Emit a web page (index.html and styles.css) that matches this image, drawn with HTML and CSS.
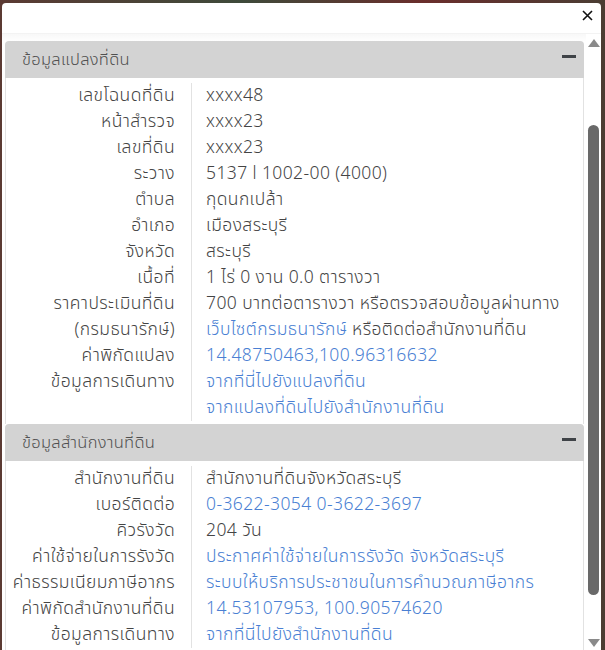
FILE: index.html
```html
<!DOCTYPE html>
<html lang="th">
<head>
    <meta charset="UTF-8">
    <meta name="viewport" content="width=device-width, initial-scale=1.0">
    <title>ข้อมูลแปลงที่ดิน</title>
    <link rel="stylesheet" href="styles.css">
</head>
<body>
    <div class="popup">
        <div class="popup-top">
            <button class="close-btn" aria-label="close">
                <svg width="11" height="11" viewBox="0 0 11 11"><path d="M1 1 L10 10 M10 1 L1 10" stroke="#111" stroke-width="1.6" fill="none"/></svg>
            </button>
        </div>

        <div class="scroll-wrap">
            <div class="content">
                <section class="panel">
                    <div class="panel-head">
                        <span>ข้อมูลแปลงที่ดิน</span>
                        <span class="minus"></span>
                    </div>
                    <div class="panel-body">
                        <div class="info-row"><div class="label">เลขโฉนดที่ดิน</div><div class="value">xxxx48</div></div>
                        <div class="info-row"><div class="label">หน้าสำรวจ</div><div class="value">xxxx23</div></div>
                        <div class="info-row"><div class="label">เลขที่ดิน</div><div class="value">xxxx23</div></div>
                        <div class="info-row"><div class="label">ระวาง</div><div class="value">5137 l 1002-00 (4000)</div></div>
                        <div class="info-row"><div class="label">ตำบล</div><div class="value">กุดนกเปล้า</div></div>
                        <div class="info-row"><div class="label">อำเภอ</div><div class="value">เมืองสระบุรี</div></div>
                        <div class="info-row"><div class="label">จังหวัด</div><div class="value">สระบุรี</div></div>
                        <div class="info-row"><div class="label">เนื้อที่</div><div class="value">1 ไร่ 0 งาน 0.0 ตารางวา</div></div>
                        <div class="info-row">
                            <div class="label">ราคาประเมินที่ดิน<br>(กรมธนารักษ์)</div>
                            <div class="value">700 บาทต่อตารางวา หรือตรวจสอบข้อมูลผ่านทาง<br><a href="#">เว็บไซต์กรมธนารักษ์</a> หรือติดต่อสำนักงานที่ดิน</div>
                        </div>
                        <div class="info-row"><div class="label">ค่าพิกัดแปลง</div><div class="value"><a href="#">14.48750463,100.96316632</a></div></div>
                        <div class="info-row">
                            <div class="label">ข้อมูลการเดินทาง</div>
                            <div class="value"><a href="#">จากที่นี่ไปยังแปลงที่ดิน</a><br><a href="#">จากแปลงที่ดินไปยังสำนักงานที่ดิน</a></div>
                        </div>
                    </div>
                </section>

                <section class="panel">
                    <div class="panel-head">
                        <span>ข้อมูลสำนักงานที่ดิน</span>
                        <span class="minus"></span>
                    </div>
                    <div class="panel-body">
                        <div class="info-row"><div class="label">สำนักงานที่ดิน</div><div class="value">สำนักงานที่ดินจังหวัดสระบุรี</div></div>
                        <div class="info-row"><div class="label">เบอร์ติดต่อ</div><div class="value"><a href="#">0-3622-3054</a> <a href="#">0-3622-3697</a></div></div>
                        <div class="info-row"><div class="label">คิวรังวัด</div><div class="value">204 วัน</div></div>
                        <div class="info-row"><div class="label">ค่าใช้จ่ายในการรังวัด</div><div class="value"><a href="#">ประกาศค่าใช้จ่ายในการรังวัด จังหวัดสระบุรี</a></div></div>
                        <div class="info-row"><div class="label">ค่าธรรมเนียมภาษีอากร</div><div class="value"><a href="#">ระบบให้บริการประชาชนในการคำนวณภาษีอากร</a></div></div>
                        <div class="info-row"><div class="label">ค่าพิกัดสำนักงานที่ดิน</div><div class="value"><a href="#">14.53107953, 100.90574620</a></div></div>
                        <div class="info-row"><div class="label">ข้อมูลการเดินทาง</div><div class="value"><a href="#">จากที่นี่ไปยังสำนักงานที่ดิน</a></div></div>
                    </div>
                </section>
            </div>

            <div class="scrollbar">
                <span class="arrow-up"></span>
                <div class="track"><div class="thumb"></div></div>
                <span class="arrow-down"></span>
            </div>
        </div>
    </div>
</body>
</html>
```

FILE: styles.css
```css
:root {
    --text-color: #444;
    --link-color: #4a7fd3;
    --head-bg: #d3d3d3;
    --line-color: #e2e2e2;
}

* {
    margin: 0;
    padding: 0;
    box-sizing: border-box;
}

body {
    font-family: "Noto Sans Thai", "Noto Sans", "DejaVu Sans", sans-serif;
    font-weight: 340;
    background: linear-gradient(90deg, #5b3a33, #3e4a3a 40%, #6a2e2c 70%, #4a3d33);
    color: var(--text-color);
    height: 650px;
    overflow: hidden;
}

.popup {
    margin: 3px 4px 0 2px;
    height: 647px;
    background: #fff;
    border-radius: 4px 4px 0 0;
    display: flex;
    flex-direction: column;
}

.popup-top {
    height: 30px;
    display: flex;
    justify-content: flex-end;
    align-items: flex-start;
    padding: 6px 7px 0 0;
}

.close-btn {
    border: none;
    background: none;
    width: 13px;
    height: 13px;
    display: flex;
    align-items: center;
    justify-content: center;
    cursor: pointer;
}

.scroll-wrap {
    flex: 1;
    display: flex;
    overflow: hidden;
    border-top: 1px solid #f3f3f3;
    background: linear-gradient(#f8f8f8, #fff 8px);
}

.content {
    flex: 1;
    padding: 7px 2px 0 3px;
    overflow: hidden;
}

.panel-head {
    height: 37px;
    background: var(--head-bg);
    border-radius: 4px 4px 0 0;
    display: flex;
    align-items: center;
    justify-content: space-between;
    padding: 0 8px 0 17px;
    font-size: 16.5px;
    letter-spacing: 0.3px;
    color: #505050;
}

.minus {
    width: 14px;
    height: 3px;
    background: #3f4347;
    margin-top: -6px;
}

.panel-body {
    background: #fff;
    border-left: 1px solid var(--line-color);
    border-right: 1px solid var(--line-color);
    padding: 5px 0 3px;
}

.info-row {
    display: grid;
    grid-template-columns: 186px 1fr;
    font-size: 17.5px;
    letter-spacing: 0.4px;
    line-height: 26px;
}

.label {
    text-align: right;
    padding-right: 16px;
    border-right: 1px solid var(--line-color);
    white-space: nowrap;
}

.value {
    padding-left: 14px;
    white-space: nowrap;
}

.value a {
    color: var(--link-color);
    text-decoration: none;
}

/* fake scrollbar */
.scrollbar {
    width: 15px;
    display: flex;
    flex-direction: column;
    align-items: center;
    background: #fff;
}

.arrow-up,
.arrow-down {
    width: 0;
    height: 0;
    border-left: 6px solid transparent;
    border-right: 6px solid transparent;
}

.arrow-up {
    margin-top: 5px;
    border-bottom: 8px solid #8a8a8a;
}

.arrow-down {
    margin-bottom: 3px;
    border-top: 8px solid #8a8a8a;
}

.track {
    flex: 1;
    width: 100%;
    display: flex;
    justify-content: center;
    padding: 78px 0 44px;
}

.thumb {
    width: 11px;
    background: #696969;
    border-radius: 6px;
}
```
